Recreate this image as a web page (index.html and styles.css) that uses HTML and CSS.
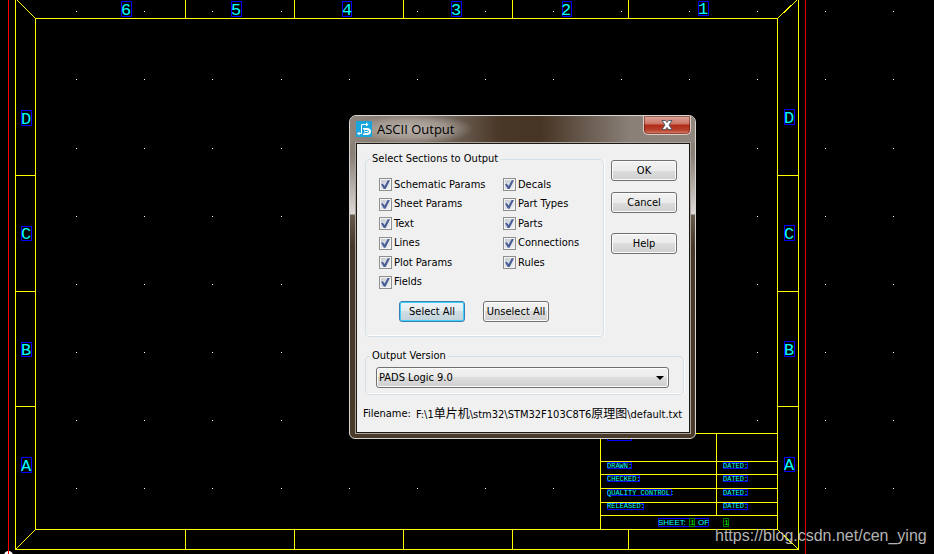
FILE: index.html
```html
<!DOCTYPE html>
<html lang="en">

<head>
    <meta charset="utf-8">
    <title>ASCII Output</title>
    <link rel="stylesheet" href="styles.css">
</head>

<body>
    <main class="workspace">
        <svg class="sheet" viewBox="0 0 934 554" preserveAspectRatio="xMinYMin slice" role="img" aria-label="Schematic sheet">
            <!-- grid dots -->
            <defs>
                <path id="dots" d="M76 0h1M144 0h1M212 0h1M281 0h1M349 0h1M417 0h1M485 0h1M553 0h1M621 0h1M689 0h1M757 0h1M825 0h1M893 0h1" />
            </defs>
            <g class="dots">
                <use href="#dots" y="11.5" />
                <use href="#dots" y="79.5" />
                <use href="#dots" y="148.5" />
                <use href="#dots" y="216.5" />
                <use href="#dots" y="284.5" />
                <use href="#dots" y="352.5" />
                <use href="#dots" y="420.5" />
                <use href="#dots" y="488.5" />
            </g>

            <!-- sheet border -->
            <g class="frame">
                <path d="M15.5 0V549.5H798.5V0M35.5 18.5H777.5V529.5H35.5Z" />
                <path d="M185.5 0V18M294.5 0V18M403.5 0V18M512.5 0V18M628.5 0V18" />
                <path d="M185.5 529V549M294.5 529V549M403.5 529V549M512.5 529V549M628.5 529V549" />
                <path d="M15 175.5H35M15 291.5H35M15 406.5H35M777 175.5H798M777 291.5H798M777 406.5H798" />
                <path d="M17 0L35.5 18.5M797 0L777.5 18.5M15.5 549.5L35.5 529.5M798.5 549.5L777.5 529.5" />
                <!-- title block -->
                <path d="M600.5 529V433.5H777M716.5 433V515M600 461.5H777M600 474.5H777M600 488.5H777M600 502.5H777M600 515.5H777" />
            </g>
            <circle class="origin" cx="8.5" cy="555.5" r="4.5" />
            <path class="axis" d="M8.5 0V554" />
            <path class="axis axis-right" d="M805.5 0V554" />

            <!-- zone labels -->
            <g class="box">
                <path d="M121.5 1.5h10v15h-10zM231.5 1.5h10v15h-10zM342.5 1.5h9v15h-9zM451.5 1.5h10v15h-10zM562.5 1.5h9v15h-9zM698.5 1.5h10v14h-10z" />
                <path d="M21.5 110.5h10v15h-10zM21.5 226.5h10v14h-10zM21.5 342.5h10v14h-10zM21.5 457.5h10v15h-10z" />
                <path d="M784.5 109.5h10v15h-10zM784.5 225.5h10v15h-10zM784.5 341.5h10v15h-10zM784.5 457.5h10v14h-10z" />
            </g>
            <g class="zone">
                <text x="126" y="15">6</text>
                <text x="236" y="15">5</text>
                <text x="347" y="15">4</text>
                <text x="456" y="15">3</text>
                <text x="566" y="15">2</text>
                <text x="703" y="14">1</text>
                <text x="26" y="124">D</text>
                <text x="26" y="239">C</text>
                <text x="26" y="355">B</text>
                <text x="26" y="471">A</text>
                <text x="789" y="123">D</text>
                <text x="789" y="239">C</text>
                <text x="789" y="355">B</text>
                <text x="789" y="470">A</text>
            </g>

            <g class="box">
                <path d="M607.5 433.5h24v7h-24z" />
                <path d="M607.5 462.5h24v6h-24zM607.5 475.5h32v6h-32zM607.5 489.5h64v6h-64zM607.5 503.5h36v6h-36z" />
                <path d="M723.5 462.5h24v6h-24zM723.5 475.5h24v6h-24zM723.5 489.5h24v6h-24zM723.5 503.5h24v6h-24z" />
                <path d="M658.5 518.5h50v8h-50z" />
                <path class="box-field" d="M689.5 518.5h5v8h-5zM723.5 518.5h5v8h-5z" />
            </g>
            <g class="note">
                <text x="607" y="468">DRAWN:</text>
                <text x="607" y="481">CHECKED:</text>
                <text x="607" y="495">QUALITY CONTROL:</text>
                <text x="607" y="508">RELEASED:</text>
                <text x="723" y="468">DATED:</text>
                <text x="723" y="481">DATED:</text>
                <text x="723" y="495">DATED:</text>
                <text x="723" y="508">DATED:</text>
                <text class="note-sheet" x="658" y="525">SHEET:</text>
                <text class="note-sheet" x="698" y="525">OF</text>
                <text class="note-field" x="690" y="525">1</text>
                <text class="note-field" x="724" y="525">1</text>
            </g>
            <text class="watermark" x="715" y="541">https://blog.csdn.net/cen_ying</text>
        </svg>

        <form class="dialog">
            <header class="titlebar">
                <svg class="app-icon" viewBox="0 0 16 16" aria-hidden="true">
                    <rect width="16" height="16" rx="1" fill="#18a5dc" />
                    <path d="M2 12.500H5.500V3.500H12" fill="none" stroke="#fff" />
                    <path d="M1 12.500L3.500 10.500V14.500ZM10 1.500L12.500 3.500L10 5.500Z" fill="#fff" />
                    <path d="M7 7H11C13.500 7 15 8.500 15 10.500S13.500 14 11 14H7V12.500H8.500V8.500H7Z" fill="#fff" />
                    <path d="M9 9.500H11.500L13 10.500L11.500 11.500H9" fill="none" stroke="#18a5dc" />
                </svg>
                <h1 class="title">ASCII Output</h1>
                <button class="close" type="button" aria-label="Close">
                    <svg viewBox="0 0 12 10" aria-hidden="true">
                        <path d="M1 .5H4.500L6 2.500L7.500 .5H11L8 5L11 9.500H7.500L6 7.500L4.500 9.500H1L4 5Z" />
                    </svg>
                </button>
            </header>

            <div class="client">
                <div class="top">
                    <fieldset class="group sections">
                        <legend>Select Sections to Output</legend>
                        <div class="checks">
                            <label><input type="checkbox" checked>Schematic Params</label>
                            <label><input type="checkbox" checked>Sheet Params</label>
                            <label><input type="checkbox" checked>Text</label>
                            <label><input type="checkbox" checked>Lines</label>
                            <label><input type="checkbox" checked>Plot Params</label>
                            <label><input type="checkbox" checked>Fields</label>
                            <label><input type="checkbox" checked>Decals</label>
                            <label><input type="checkbox" checked>Part Types</label>
                            <label><input type="checkbox" checked>Parts</label>
                            <label><input type="checkbox" checked>Connections</label>
                            <label><input type="checkbox" checked>Rules</label>
                        </div>
                        <div class="select-buttons">
                            <button class="btn btn-focus" type="button">Select All</button>
                            <button class="btn" type="button">Unselect All</button>
                        </div>
                    </fieldset>
                    <div class="actions">
                        <button class="btn" type="button">OK</button>
                        <button class="btn" type="button">Cancel</button>
                        <button class="btn btn-help" type="button">Help</button>
                    </div>
                </div>

                <fieldset class="group version">
                    <legend>Output Version</legend>
                    <div class="dropdown">
                        <select aria-label="Output Version">
                            <option>PADS Logic 9.0</option>
                        </select>
                    </div>
                </fieldset>

                <p class="filename"><span>Filename:</span><span>F:\1<span class="cjk">单片机</span>\stm32\STM32F103C8T6<span class="cjk">原理图</span>\default.txt</span></p>
            </div>
        </form>
    </main>
</body>

</html>
```
FILE: styles.css
```css
* {
    box-sizing: border-box;
}

body {
    margin: 0;
    background: #000;
    color: #000;
    font: 11px/14px "DejaVu Sans Condensed", "Noto Sans CJK SC", sans-serif;
}

.workspace {
    position: relative;
    height: 100vh;
    overflow: hidden;
}

/* schematic sheet */
.sheet {
    display: block;
    width: 100%;
    height: 100%;
}

.dots {
    stroke: #fff;
}

.frame {
    fill: none;
    stroke: #ff0;
    shape-rendering: crispEdges;
}

.axis {
    stroke: #f00;
}

.axis-right {
    stroke: #d00;
}

.origin {
    fill: #fff;
}

.box {
    fill: none;
    stroke: #00f;
}

.box-field {
    stroke: #008000;
}

.zone {
    fill: #0ff;
    font: 17px "Liberation Mono", monospace;
    text-anchor: middle;
}

.note {
    fill: #0ff;
    font: 7px "Liberation Mono", monospace;
}

.note-sheet {
    font: 8px "Liberation Sans", sans-serif;
}

.note-field {
    fill: #0f0;
    font-size: 8px;
}

.watermark {
    fill: #b4b4b4;
    font: 16px "Liberation Sans", sans-serif;
}

/* dialog window */
.dialog {
    position: absolute;
    top: 115px;
    left: 349px;
    width: 347px;
    padding: 0 5px 5px 6px;
    border: 1px solid #d8d4d0;
    border-radius: 7px 7px 6px 6px;
    background: linear-gradient(#8a8078, #8a8078 40px, #ddd9d6 98px, #675a4c 99px, #46372a 130px, #4a3a2a);
}

.titlebar {
    display: flex;
    align-items: flex-start;
    height: 27px;
    margin: 0 -5px 0 -6px;
    padding: 0 4px 0 6px;
    border-radius: 6px 6px 0 0;
    background:
        radial-gradient(60px 15px at 64px 13px, rgba(205, 198, 192, .75), rgba(205, 198, 192, .45) 60%, transparent),
        linear-gradient(90deg, #90867d, #6f6358 100px, #493727 150px, #463424 190px, #8a8078 280px, #90887f);
}

.app-icon {
    width: 16px;
    height: 16px;
    margin-top: 5px;
}

.title {
    margin: 4px auto 0 5px;
    font: 13px/18px "Open Sans", sans-serif;
}

.close {
    display: flex;
    align-items: center;
    justify-content: center;
    width: 48px;
    height: 19px;
    padding: 0;
    border: 1px solid #e0cac4;
    border-top: 0;
    border-radius: 0 0 5px 5px;
    background: linear-gradient(#dda79b, #cd7464 8px, #b02c18 9px, #b8402c 14px, #dc8a74);
    box-shadow: inset 0 0 0 1px rgba(80, 20, 10, .5);
}

.close svg {
    width: 12px;
    height: 10px;
    fill: #fff;
    stroke: #555a66;
}

.client {
    padding: 8px 5px 10px 6px;
    border: 1px solid #1c1814;
    outline: 1px solid #aaa49c;
    background: #f0f0f0;
}

.top {
    display: flex;
    gap: 7px;
}

.group {
    min-width: 0;
    margin: 0 0 0 2px;
    padding: 0 4px;
    border: 1px solid #d5dfe5;
    border-radius: 4px;
    box-shadow: inset 0 -1px #fff, 1px 0 #fff;
}

.group legend {
    padding: 0 2px;
}

.sections {
    flex: 1;
    padding-bottom: 14px;
}

.checks {
    display: grid;
    grid-auto-flow: column;
    grid-template-rows: repeat(6, 1fr);
    grid-template-columns: 124px 1fr;
    height: 117px;
    margin: 9px 0 9px 9px;
}

.checks label {
    display: flex;
    align-items: center;
    gap: 2px;
}

.checks input {
    appearance: none;
    display: grid;
    place-items: center;
    width: 13px;
    height: 13px;
    margin: 0;
    border: 1px solid #8e8f8f;
    background: linear-gradient(135deg, #c2c8d0, #f6f6f6);
    box-shadow: inset 0 0 0 1px #f4f4f4;
}

.checks input:checked::before {
    content: "";
    width: 9px;
    height: 9px;
    background: #4a5f97;
    clip-path: polygon(0 45%, 20% 38%, 40% 65%, 75% 0, 100% 0, 50% 100%, 32% 100%);
}

.select-buttons {
    display: flex;
    gap: 18px;
    margin-left: 29px;
}

.btn {
    width: 66px;
    height: 21px;
    padding: 0;
    border: 1px solid #707070;
    border-radius: 3px;
    background: linear-gradient(#f2f2f2, #ebebeb 50%, #dddddd 50%, #cfcfcf);
    box-shadow: inset 0 0 0 1px #fcfcfc;
    color: #000;
    font: inherit;
    white-space: nowrap;
}

.btn-focus {
    border-color: #3c7fb1;
    background: linear-gradient(#edf2f5, #e3ecf0 50%, #d0dde4 50%, #c3d2da);
    box-shadow: inset 0 0 0 1px #3fd0fa;
}

.actions {
    display: flex;
    flex-direction: column;
    gap: 11px;
    width: 73px;
    padding-top: 8px;
}

.btn-help {
    margin-top: 9px;
}

.version {
    margin-top: 12px;
    padding-bottom: 6px;
}

.dropdown {
    position: relative;
    margin: 4px 10px 0 6px;
}

.dropdown::after {
    content: "";
    position: absolute;
    top: 9px;
    right: 5px;
    border: 4px solid transparent;
    border-top-color: #000;
    border-bottom: 0;
    pointer-events: none;
}

.dropdown select {
    appearance: none;
    display: block;
    width: 100%;
    height: 21px;
    padding: 0 2px;
    border: 1px solid #707070;
    border-radius: 3px;
    background: linear-gradient(#f2f2f2, #ebebeb 50%, #dddddd 50%, #cfcfcf);
    box-shadow: inset 0 0 0 1px #fcfcfc;
    color: #000;
    font: inherit;
}

.filename {
    display: flex;
    gap: 5px;
    height: 16px;
    margin: 11px 0 0;
    line-height: 16px;
    white-space: nowrap;
}

.cjk {
    font-size: 12px;
}
```
